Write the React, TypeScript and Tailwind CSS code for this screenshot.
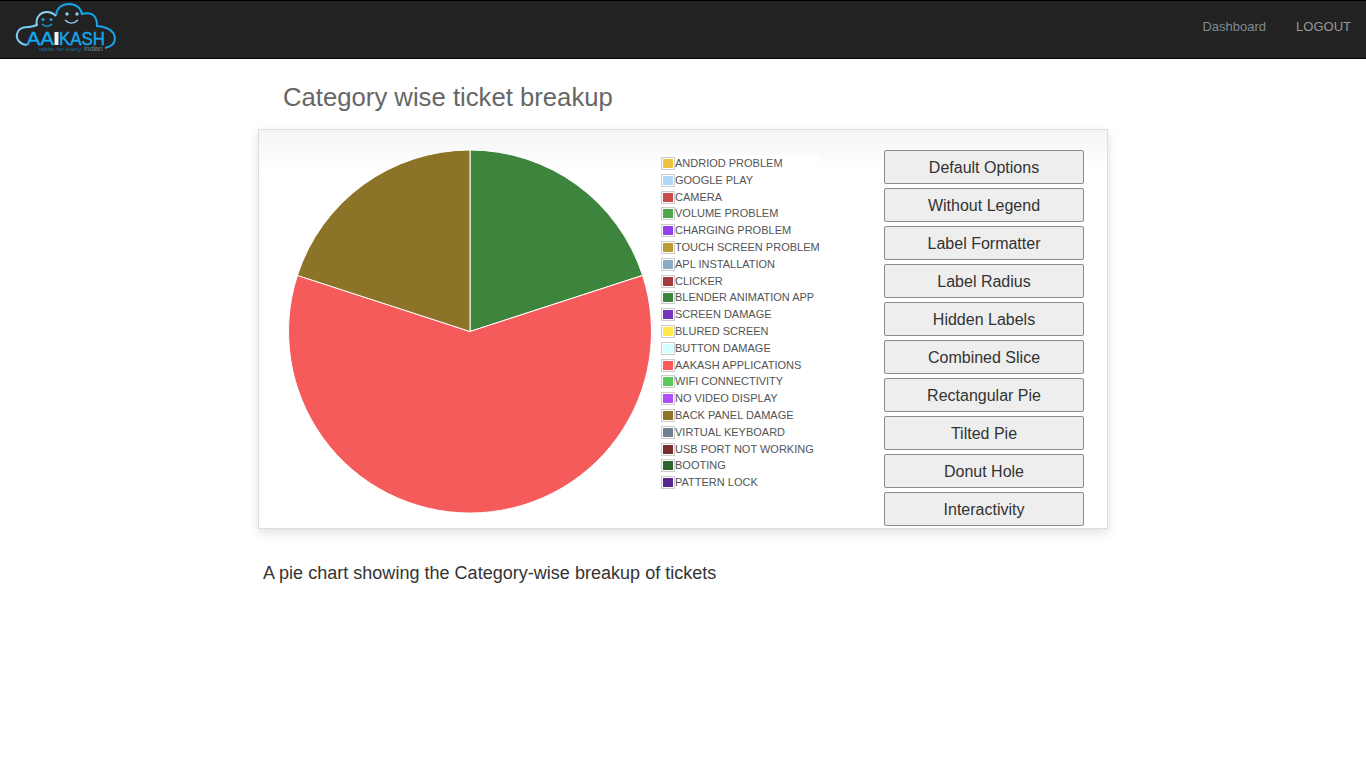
const legend = [
  { label: "ANDRIOD PROBLEM", color: "bg-[#edc240]" },
  { label: "GOOGLE PLAY", color: "bg-[#afd8f8]" },
  { label: "CAMERA", color: "bg-[#cb4b4b]" },
  { label: "VOLUME PROBLEM", color: "bg-[#4da74d]" },
  { label: "CHARGING PROBLEM", color: "bg-[#9440ed]" },
  { label: "TOUCH SCREEN PROBLEM", color: "bg-[#bd9b33]" },
  { label: "APL INSTALLATION", color: "bg-[#8cacc6]" },
  { label: "CLICKER", color: "bg-[#a23c3c]" },
  { label: "BLENDER ANIMATION APP", color: "bg-[#3d853d]" },
  { label: "SCREEN DAMAGE", color: "bg-[#7633bd]" },
  { label: "BLURED SCREEN", color: "bg-[#ffe84c]" },
  { label: "BUTTON DAMAGE", color: "bg-[#d2ffff]" },
  { label: "AAKASH APPLICATIONS", color: "bg-[#ff5a5a]" },
  { label: "WIFI CONNECTIVITY", color: "bg-[#5cc85c]" },
  { label: "NO VIDEO DISPLAY", color: "bg-[#b24cff]" },
  { label: "BACK PANEL DAMAGE", color: "bg-[#8e7426]" },
  { label: "VIRTUAL KEYBOARD", color: "bg-[#708194]" },
  { label: "USB PORT NOT WORKING", color: "bg-[#792d2d]" },
  { label: "BOOTING", color: "bg-[#2e642e]" },
  { label: "PATTERN LOCK", color: "bg-[#58268e]" },
]

const buttons = [
  "Default Options",
  "Without Legend",
  "Label Formatter",
  "Label Radius",
  "Hidden Labels",
  "Combined Slice",
  "Rectangular Pie",
  "Tilted Pie",
  "Donut Hole",
  "Interactivity",
]

function Logo() {
  return (
    <svg width="120" height="57" viewBox="0 0 120 57">
      <path
        d="M27 44 C19 43 16 38 17 33 C18 28 23 26 28 26 C31 26 34 25 37 24"
        fill="none"
        stroke="#7cc9ef"
        strokeWidth="2"
      />
      <path
        d="M37 25 C35 17 40 11 47 11 C51 11 54 13 56 15"
        fill="none"
        stroke="#8ed2f2"
        strokeWidth="2"
      />
      <path
        d="M56 14 C57 7 62 3 69 3 C76 3 81 7 82 13 C86 12 92 12 95 16 C97 19 97 23 97 25 C103 25 114 28 115 37 C115 43 110 46 105 47"
        fill="none"
        stroke="#12a5ec"
        strokeWidth="2"
      />
      <circle cx="43" cy="18.5" r="1.5" fill="#12a5ec" />
      <circle cx="51" cy="18.5" r="1.5" fill="#12a5ec" />
      <path d="M42 23 C45 26 49 26 52 23" fill="none" stroke="#12a5ec" strokeWidth="1.5" />
      <circle cx="67" cy="13" r="1.7" fill="#8ed2f2" />
      <circle cx="77" cy="13" r="1.7" fill="#8ed2f2" />
      <path d="M65 19 C69 23 74 23 78 19" fill="none" stroke="#8ed2f2" strokeWidth="1.6" />
      <text x="26.5" y="44" fontFamily="Liberation Sans, sans-serif" fontSize="18" fill="#14a8f0" stroke="#14a8f0" strokeWidth="0.4" textLength="27.5" lengthAdjust="spacingAndGlyphs">
        AA
      </text>
      <rect x="54.5" y="31" width="4" height="13" fill="#f4f4f4" />
      <text x="59" y="44" fontFamily="Liberation Sans, sans-serif" fontSize="18" fill="#14a8f0" stroke="#14a8f0" strokeWidth="0.4" textLength="46" lengthAdjust="spacingAndGlyphs">
        KASH
      </text>
      <text x="39" y="50" fontFamily="Liberation Sans, sans-serif" fontSize="6" fill="#1d6f9e" textLength="42">
        tablet for every
      </text>
      <text x="84" y="50" fontFamily="Liberation Sans, sans-serif" fontSize="7.5" fill="#6d7f88" textLength="19">
        indian
      </text>
    </svg>
  )
}

function PieChart() {
  return (
    <svg width="364" height="366" viewBox="0 0 364 366" className="mt-[19px] ml-[29px] shrink-0">
      <path d="M182 182.5 L182 1 A181.5 181.5 0 0 1 354.6 126.4 Z" fill="#3d853d" stroke="#fff" />
      <path d="M182 182.5 L354.6 126.4 A181.5 181.5 0 1 1 9.4 126.4 Z" fill="#f65b5b" stroke="#fff" />
      <path d="M182 182.5 L9.4 126.4 A181.5 181.5 0 0 1 182 1 Z" fill="#8c7328" stroke="#fff" />
    </svg>
  )
}

export default function App() {
  return (
    <div className="min-h-screen bg-white font-['Liberation_Sans',sans-serif]">
      <nav className="flex h-[59px] items-center justify-between border-y border-black bg-[#222222]">
        <Logo />
        <div className="flex items-center gap-[30px] pr-[15px] pb-[5px] text-[13px] text-[#999999]">
          <a className="text-[#808a94]">Dashboard</a>
          <a>LOGOUT</a>
        </div>
      </nav>

      <main className="mx-auto w-[850px]">
        <h2 className="pt-[21px] pl-[25px] text-[25.7px] leading-[35px] font-normal text-[#666666]">
          Category wise ticket breakup
        </h2>
        <div className="mt-[14px] flex h-[400px] border border-[#dddddd] bg-gradient-to-b from-[#f5f5f5] to-white to-[40px] shadow-[0_4px_10px_rgba(0,0,0,0.12)]">
          <PieChart />
          <div className="mt-[25.15px] ml-[8px] w-[159px] self-start bg-white">
            {legend.map((item) => (
              <div key={item.label} className="flex h-[16.8px] items-center pl-px">
                <div className="h-[13px] w-[14px] shrink-0 border border-[#cccccc] p-px">
                  <div className={`h-full w-full ${item.color}`} />
                </div>
                <span className="text-[11px] leading-none whitespace-nowrap text-[#545454]">{item.label}</span>
              </div>
            ))}
          </div>
          <div className="mt-[20px] mr-[23px] ml-auto flex flex-col gap-1">
            {buttons.map((label) => (
              <button
                key={label}
                className="h-[34px] w-[200px] rounded-[2px] border border-[#8c8c8c] bg-[#eeeeee] pt-px text-base text-[#333333]"
              >
                {label}
              </button>
            ))}
          </div>
        </div>
        <p className="mt-[33px] pl-[5px] text-lg leading-[22px] tracking-[0.02px] text-[#333333]">
          A pie chart showing the Category-wise breakup of tickets
        </p>
      </main>
    </div>
  )
}
